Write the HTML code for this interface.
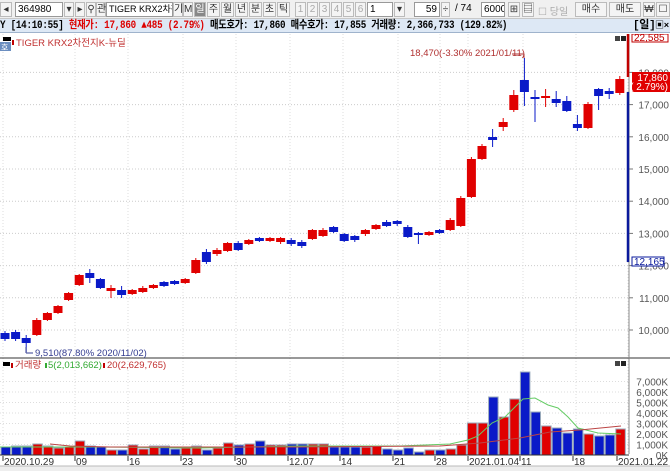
<!DOCTYPE html>
<html><head><meta charset="utf-8"><style>
*{margin:0;padding:0;box-sizing:border-box}
body{width:670px;height:471px;overflow:hidden;background:#fff;font-family:"Liberation Sans","Noto Sans CJK KR",sans-serif;font-size:11px;position:relative}
.tb{position:absolute;left:0;top:0;width:670px;height:19px;background:#f0f0f0;border-bottom:1px solid #c8c8c8}
.ib{position:absolute;left:0;top:19px;width:670px;height:14px;background:#dde8f5;border-bottom:1px solid #9fb3cc;font-size:11px;font-weight:bold;line-height:14px;white-space:nowrap;font-family:"Liberation Mono","Noto Sans CJK KR",monospace;letter-spacing:-0.3px}
.bx{position:absolute;top:2px;height:15px;border:1px solid #999;background:#fff;font-size:10px;line-height:13px;padding-left:2px;white-space:nowrap;overflow:hidden}
.btn{position:absolute;top:2px;height:15px;border:1px solid #bbb;background:#f4f4f4;font-size:10px;line-height:13px;text-align:center;color:#333}
</style></head><body>
<div class="tb">
<div class="btn" style="left:0;width:12px">◂</div>
<div class="bx" style="left:15px;width:48px">364980</div>
<div class="btn" style="left:64px;width:10px">▾</div>
<div class="btn" style="left:75px;width:10px">▸</div>
<div class="btn" style="left:86px;width:10px">⚲</div>
<div class="btn" style="left:96px;width:10px">관</div>
<div class="bx" style="left:106px;width:67px;font-size:9px">TIGER KRX2차전지</div>
<div class="btn" style="left:173px;width:10px">기</div>
<div class="btn" style="left:183px;width:10px">M</div>
<div class="btn" style="left:194px;width:12px;background:#888;color:#fff">일</div>
<div class="btn" style="left:207px;width:13px">주</div>
<div class="btn" style="left:221px;width:13px">월</div>
<div class="btn" style="left:235px;width:13px">년</div>
<div class="btn" style="left:249px;width:13px">분</div>
<div class="btn" style="left:263px;width:13px">초</div>
<div class="btn" style="left:277px;width:13px">틱</div>
<div class="btn" style="left:295px;width:11px;color:#aaa">1</div>
<div class="btn" style="left:307px;width:11px;color:#aaa">2</div>
<div class="btn" style="left:319px;width:11px;color:#aaa">3</div>
<div class="btn" style="left:331px;width:11px;color:#aaa">4</div>
<div class="btn" style="left:343px;width:11px;color:#aaa">5</div>
<div class="btn" style="left:355px;width:11px;color:#aaa">6</div>
<div class="bx" style="left:367px;width:26px">1</div>
<div class="btn" style="left:394px;width:11px">▾</div>
<div class="bx" style="left:414px;width:26px;text-align:right;padding-right:2px">59</div>
<div class="btn" style="left:441px;width:9px">÷</div>
<div style="position:absolute;left:455px;top:3px;font-size:10px">/ 74</div>
<div class="bx" style="left:481px;width:24px">6000</div>
<div class="btn" style="left:508px;width:12px">⊞</div>
<div class="btn" style="left:522px;width:12px">▤</div>
<div style="position:absolute;left:538px;top:3px;font-size:10px;color:#aaa">☐ 당일</div>
<div class="btn" style="left:575px;width:32px">매수</div>
<div class="btn" style="left:609px;width:32px">매도</div>
<div class="btn" style="left:643px;width:12px">₩</div>
<div class="btn" style="left:656px;width:14px">☐</div>
</div>
<div class="ib"><span style="display:inline-block;transform:scaleX(0.84);transform-origin:0 0"><span style="color:#000">Y [14:10:55] </span><span style="color:#d00">현재가: 17,860 ▲485 (2.79%)</span><span> 매도호가: 17,860 매수호가: 17,855 거래량: 2,366,733 (129.82%)</span></span><span style="position:absolute;left:633px;top:0">[일]</span><span style="position:absolute;left:655px;font-size:9px">▣×</span></div>
<svg id="ch" style="position:absolute;left:0;top:34px" width="670" height="437" viewBox="0 34 670 437" font-family="Liberation Sans, Noto Sans CJK KR, sans-serif"></svg>
<script>
var s='';
function r(x,y,w,h,c,st){s+='<rect x="'+x+'" y="'+y+'" width="'+w+'" height="'+h+'" fill="'+c+'"'+(st?' stroke="'+st+'"':'')+'/>';}
function l(x1,y1,x2,y2,c,w,d){s+='<line x1="'+x1+'" y1="'+y1+'" x2="'+x2+'" y2="'+y2+'" stroke="'+c+'" stroke-width="'+(w||1)+'"'+(d?' stroke-dasharray="'+d+'"':'')+'/>';}
function t(x,y,tx,c,sz,a){s+='<text x="'+x+'" y="'+y+'" fill="'+c+'" font-size="'+(sz||10)+'"'+(a?' text-anchor="'+a+'"':'')+'>'+tx+'</text>';}
var py=function(p){return 330-(p-10000)*0.0322;};
for(var p=10000;p<=18000;p+=1000){var y=py(p);l(0,y,628,y,'#ccc',1,'1 2');t(669,y+4,(p/1000)+',000','#555',10,'end');l(629,y,633,y,'#777');}
var vx=[3,75,128,183,236,290,343,398,440,468,523,576,628];
vx.forEach(function(x){l(x,34,x,454,'#ddd',1,'1 2');});
for(var k=1;k<=7;k++){var y=455-k*10.5;l(0,y,628,y,'#ddd',1,'1 2');t(668,y+4,k+',000K','#555',10,'end');}
t(668,459,'0K','#555',10,'end');
var C=[[333,339,'b',331,341],[332,339,'b',330,341],[338,343,'b',335,352],[320,335,'r',318,336],[313,320,'r',312,321],[306,313,'r',305,314],[293,300,'r',292,301],[275,285,'r',274,286],[273,278,'b',269,283],[279,288,'b',278,289],[288,291,'r',285,298],[290,295,'b',286,298],[290,294,'r',289,295],[288,292,'r',286,293],[285,288,'r',284,289],[282,286,'b',281,287],[281,284,'b',280,285],[279,283,'r',278,284],[260,273,'r',258,274],[252,262,'b',249,264],[250,254,'r',248,256],[243,251,'r',242,252],[243,250,'b',241,251],[240,244,'r',239,245],[238,241,'b',237,242],[238,241,'r',237,242],[238,242,'r',237,244],[240,244,'b',238,246],[242,246,'b',240,248],[230,239,'r',229,240],[230,236,'r',228,237],[227,232,'b',226,233],[234,241,'b',233,242],[236,240,'b',235,242],[230,234,'r',229,236],[225,229,'r',224,230],[222,226,'b',220,227],[221,224,'b',220,226],[227,237,'b',225,238],[233,235,'b',232,244],[232,235,'r',231,236],[230,233,'b',229,234],[220,230,'r',218,231],[198,226,'r',196,227],[159,197,'r',157,198],[146,159,'r',144,160],[137,140,'b',129,147],[122,127,'r',118,131],[95,110,'r',90,112],[80,92,'b',58,106],[97,99,'b',90,122],[96,98,'r',89,107],[99,103,'b',91,107],[101,111,'b',96,112],[124,128,'b',115,131],[104,128,'r',102,129],[89,96,'b',88,110],[91,94,'b',88,99],[79,93,'r',76,95]];
var V=[8,9,9,11,9,7,8,14,9,8,5,5,10,6,9,9,6,7,9,5,7,12,10,11,14,10,10,11,11,11,11,8,8,8,8,9,6,5,7,3,5,5,6,10,32,32,58,38,56,83,43,29,27,22,26,21,19,20,26];
var LC=['r','r','b','r','r','b','b','r','b','b','b','r','b','b','r'];
V.forEach(function(v,i){var x=1+i*10.6;var cc=C[i]?C[i][2]:'r';if(i>=44)cc=LC[i-44];var col=cc=='b'?'#0a1ac8':'#e00000';r(x,455-v,9.5,v,col,'#9ab');});
C.forEach(function(c,i){var x=5+i*10.6;var col=c[2]=='r'?'#e00000':'#0a1ac8';l(x,c[3],x,c[4],col);r(x-4.5,c[0],9,Math.max(c[1]-c[0],1.5),col);});
s+='<polyline fill="none" stroke="#6c6" stroke-width="1" points="0,447 100,447 200,448 300,446 400,446 450,444 468,440 478,436 492,423 505,417 517,405 523,399 535,398 548,405 558,408 568,417 578,428 598,433 621,434"/>';
s+='<polyline fill="none" stroke="#b44" stroke-width="1" points="50,444 70,446 110,447 300,447 440,446 480,443 520,438 550,432 580,430 621,426"/>';
l(0,358,670,358,'#333');l(629,34,629,454,'#888');l(0,455,629,455,'#333');
l(628,34,628,77,'#c00000',2.5);l(628,92,628,262,'#0a1a9c',2.5);
r(632,34,36,8,'#fff','#c00000');t(634,41,'22,585','#c00000',10);
r(632,72,38,20,'#e00000');t(668,81,'17,860','#fff',10,'end');t(668,90,'( 2.79%)','#fff',10,'end');
r(632,257,32,9,'#fff','#0a1a9c');t(634,265,'12,165','#0a1a9c',10);
r(615,36,5,5,'#444');r(621,36,5,5,'#222');r(615,361,5,5,'#444');r(621,361,5,5,'#222');
t(410,56,'18,470(-3.30% 2021/01/11)','#b03030',9.5);l(512,54,524,54,'#b03030');l(524,54,524,58,'#b03030');
t(35,356,'9,510(87.80% 2020/11/02)','#333c90',9.5);l(26,347,26,353,'#333c90');l(26,353,33,353,'#333c90');
r(3,37,8,4,'#000');r(0,42,11,9,'#6b8ec0');t(1,50,'호','#fff',8);
r(12,40,2,5,'#c00000');t(16,46,'TIGER KRX2차전지K-뉴딜','#c03030',9.5);
r(3,362,7,4,'#000');r(11,363,2,5,'#c00000');t(15,368,'거래량','#c03030',9.5);r(45,363,2,5,'#3a3');t(48,368,'5(2,013,662)','#3a3',9.5);r(103,363,2,5,'#c00000');t(107,368,'20(2,629,765)','#c03030',9.5);
var D=[[3,'2020.10.29'],[75,'09'],[128,'16'],[181,'23'],[235,'30'],[288,'12.07'],[340,'14'],[393,'21'],[435,'28'],[468,'2021.01.04'],[520,'11'],[573,'18'],[617,'2021.01.22']];
D.forEach(function(d){l(d[0],456,d[0],461,'#333');t(d[0]+1,465,d[1],'#333',10);});
r(0,466,670,5,'#eee');l(0,466,670,466,'#bbb');
document.getElementById('ch').innerHTML=s;
</script>
</body></html>
